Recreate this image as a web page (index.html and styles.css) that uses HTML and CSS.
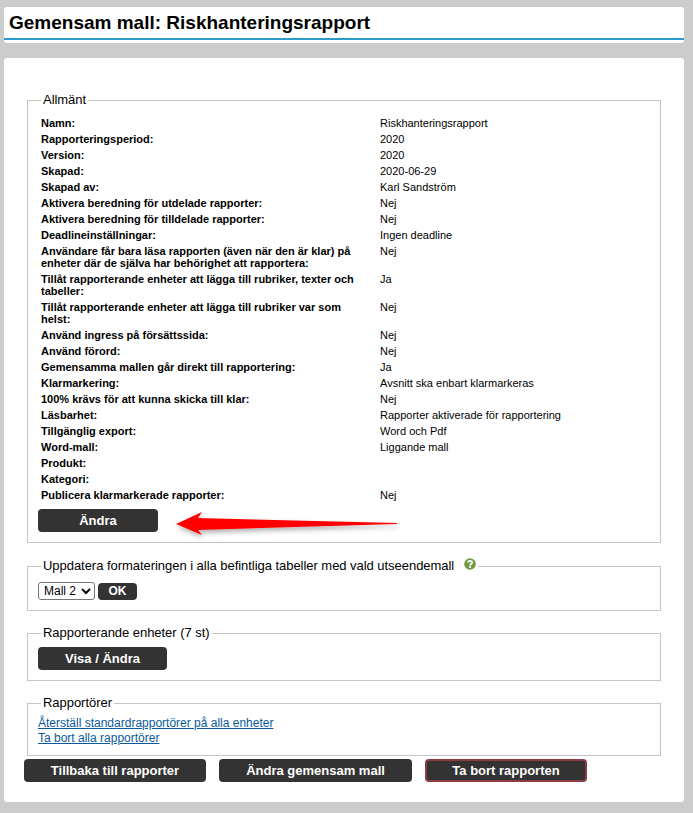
FILE: index.html
```html
<!DOCTYPE html>
<html lang="sv">
<head>
    <meta charset="UTF-8">
    <meta name="viewport" content="width=device-width, initial-scale=1.0">
    <title>Gemensam mall: Riskhanteringsrapport</title>
    <link rel="stylesheet" href="styles.css">
</head>
<body>

    <div class="page-title">
        <h1>Gemensam mall: Riskhanteringsrapport</h1>
    </div>

    <div class="content">
        <fieldset class="box box-general">
            <legend>Allmänt</legend>
            <div class="info">
                <div class="label">Namn:</div><div class="value">Riskhanteringsrapport</div>
                <div class="label">Rapporteringsperiod:</div><div class="value">2020</div>
                <div class="label">Version:</div><div class="value">2020</div>
                <div class="label">Skapad:</div><div class="value">2020-06-29</div>
                <div class="label">Skapad av:</div><div class="value">Karl Sandström</div>
                <div class="label">Aktivera beredning för utdelade rapporter:</div><div class="value">Nej</div>
                <div class="label">Aktivera beredning för tilldelade rapporter:</div><div class="value">Nej</div>
                <div class="label">Deadlineinställningar:</div><div class="value">Ingen deadline</div>
                <div class="label">Användare får bara läsa rapporten (även när den är klar) på enheter där de själva har behörighet att rapportera:</div><div class="value">Nej</div>
                <div class="label">Tillåt rapporterande enheter att lägga till rubriker, texter och tabeller:</div><div class="value">Ja</div>
                <div class="label">Tillåt rapporterande enheter att lägga till rubriker var som helst:</div><div class="value">Nej</div>
                <div class="label">Använd ingress på försättssida:</div><div class="value">Nej</div>
                <div class="label">Använd förord:</div><div class="value">Nej</div>
                <div class="label">Gemensamma mallen går direkt till rapportering:</div><div class="value">Ja</div>
                <div class="label">Klarmarkering:</div><div class="value">Avsnitt ska enbart klarmarkeras</div>
                <div class="label">100% krävs för att kunna skicka till klar:</div><div class="value">Nej</div>
                <div class="label">Läsbarhet:</div><div class="value">Rapporter aktiverade för rapportering</div>
                <div class="label">Tillgänglig export:</div><div class="value">Word och Pdf</div>
                <div class="label">Word-mall:</div><div class="value">Liggande mall</div>
                <div class="label">Produkt:</div><div class="value"></div>
                <div class="label">Kategori:</div><div class="value"></div>
                <div class="label">Publicera klarmarkerade rapporter:</div><div class="value">Nej</div>
            </div>
            <button class="btn btn-change">Ändra</button>
            <!-- Pilen ligger ovanpå innehållet -->
            <svg class="arrow" width="240" height="40" viewBox="0 0 240 40">
                <defs>
                    <filter id="arrowShadow" x="-10%" y="-50%" width="120%" height="200%">
                        <feDropShadow dx="1" dy="3" stdDeviation="2.5" flood-color="#000" flood-opacity="0.3"/>
                    </filter>
                </defs>
                <path d="M6 15 L32 3 L28 9 L227 14 L227 15 L28 21 L32 26 Z" fill="#f00" filter="url(#arrowShadow)"/>
            </svg>
        </fieldset>

        <fieldset class="box box-format">
            <legend>Uppdatera formateringen i alla befintliga tabeller med vald utseendemall
                <svg class="help" width="12" height="12" viewBox="0 0 12 12">
                    <circle cx="6" cy="6" r="5.8" fill="#6f9a3f"/>
                    <path d="M4 4.6 C4 2.2 8.2 2.2 8.2 4.5 C8.2 6 6.1 5.9 6.1 7.4" fill="none" stroke="#fff" stroke-width="1.7"/>
                    <rect x="5.2" y="8.2" width="1.8" height="1.8" fill="#fff"/>
                </svg>
            </legend>
            <div class="format-row">
                <select class="template">
                    <option>Mall 2</option>
                </select>
                <button class="btn btn-ok">OK</button>
            </div>
        </fieldset>

        <fieldset class="box box-units">
            <legend>Rapporterande enheter (7 st)</legend>
            <button class="btn btn-units">Visa / Ändra</button>
        </fieldset>

        <fieldset class="box box-reporters">
            <legend>Rapportörer</legend>
            <a href="#">Återställ standardrapportörer på alla enheter</a>
            <a href="#">Ta bort alla rapportörer</a>
        </fieldset>

        <div class="actions">
            <button class="btn btn-back">Tillbaka till rapporter</button>
            <button class="btn btn-edit">Ändra gemensam mall</button>
            <button class="btn btn-delete">Ta bort rapporten</button>
        </div>
    </div>

</body>
</html>
```

FILE: styles.css
```css
body {
    font-family: "Liberation Sans", Arial, sans-serif;
    font-size: 12px;
    background-color: #ccc;
    color: #000;
    margin: 0;
    padding: 7px 9px 11px 4px;
}
.page-title {
    background-color: #fff;
    border-radius: 3px;
    height: 36px;
    box-sizing: border-box;
    padding-top: 4px;
    position: relative;
}
.page-title::after {
    content: "";
    display: block;
    height: 2px;
    background-color: #2a9bc9;
    position: absolute;
    left: 0;
    right: 0;
    top: 31px;
}
h1 {
    font-size: 19px;
    line-height: 24px;
    margin: 0 0 0 5px;
}
.content {
    background-color: #fff;
    border-radius: 3px;
    margin-top: 15px;
    height: 744px;
    box-sizing: border-box;
    padding: 34px 23px 0 20px;
}
.box {
    border: 1px solid #c4c4c4;
    margin: 0 0 14px 3px;
    padding: 0 10px;
    min-width: 0;
    position: relative;
    box-sizing: border-box;
}
legend {
    font-size: 13px;
    line-height: 14px;
    letter-spacing: -0.04px;
    padding: 1px 2px 2px;
    margin-left: 3px;
}
.box-general {
    height: 451px;
    margin-bottom: 15px;
}
.info {
    display: grid;
    grid-template-columns: 342px 1fr;
    line-height: 12px;
    font-size: 11px;
    padding-top: 6px;
}
.label {
    font-weight: bold;
    padding: 2px 13px 2px 3px;
}
.value {
    padding: 2px 0;
}
.btn {
    display: block;
    border: none;
    border-radius: 4px;
    background-color: #333;
    color: #fff;
    font-family: inherit;
    font-weight: bold;
    font-size: 13px;
    height: 23px;
    padding: 0;
    cursor: pointer;
}
.btn-change {
    width: 120px;
    margin-top: 6px;
}
.arrow {
    position: absolute;
    left: 142px;
    top: 400px;
}
.box-format {
    height: 53px;
}
.help {
    vertical-align: top;
    margin: -1px 0 0 6px;
}
.format-row {
    display: flex;
    gap: 3px;
    align-items: center;
    margin-top: 7px;
}
.template {
    font-family: inherit;
    font-size: 12px;
    width: 57px;
    height: 18px;
    padding: 0 0 0 1px;
    background-color: #fff;
    border: 1px solid #767676;
    border-radius: 3px;
}
.btn-ok {
    width: 39px;
    height: 17px;
    font-size: 12px;
}
.box-units {
    height: 56px;
}
.btn-units {
    width: 129px;
    margin-top: 5px;
}
.box-reporters {
    height: 61px;
    margin-bottom: 0;
    line-height: 15px;
    padding-top: 4px;
}
.box-reporters a {
    display: block;
    color: #0b5a9e;
    font-size: 12px;
}
.actions {
    display: flex;
    gap: 13px;
    margin-top: 3px;
}
.btn-back {
    width: 182px;
}
.btn-edit {
    width: 193px;
}
.btn-delete {
    width: 162px;
    border: 2px solid #8e3b44;
}
```
